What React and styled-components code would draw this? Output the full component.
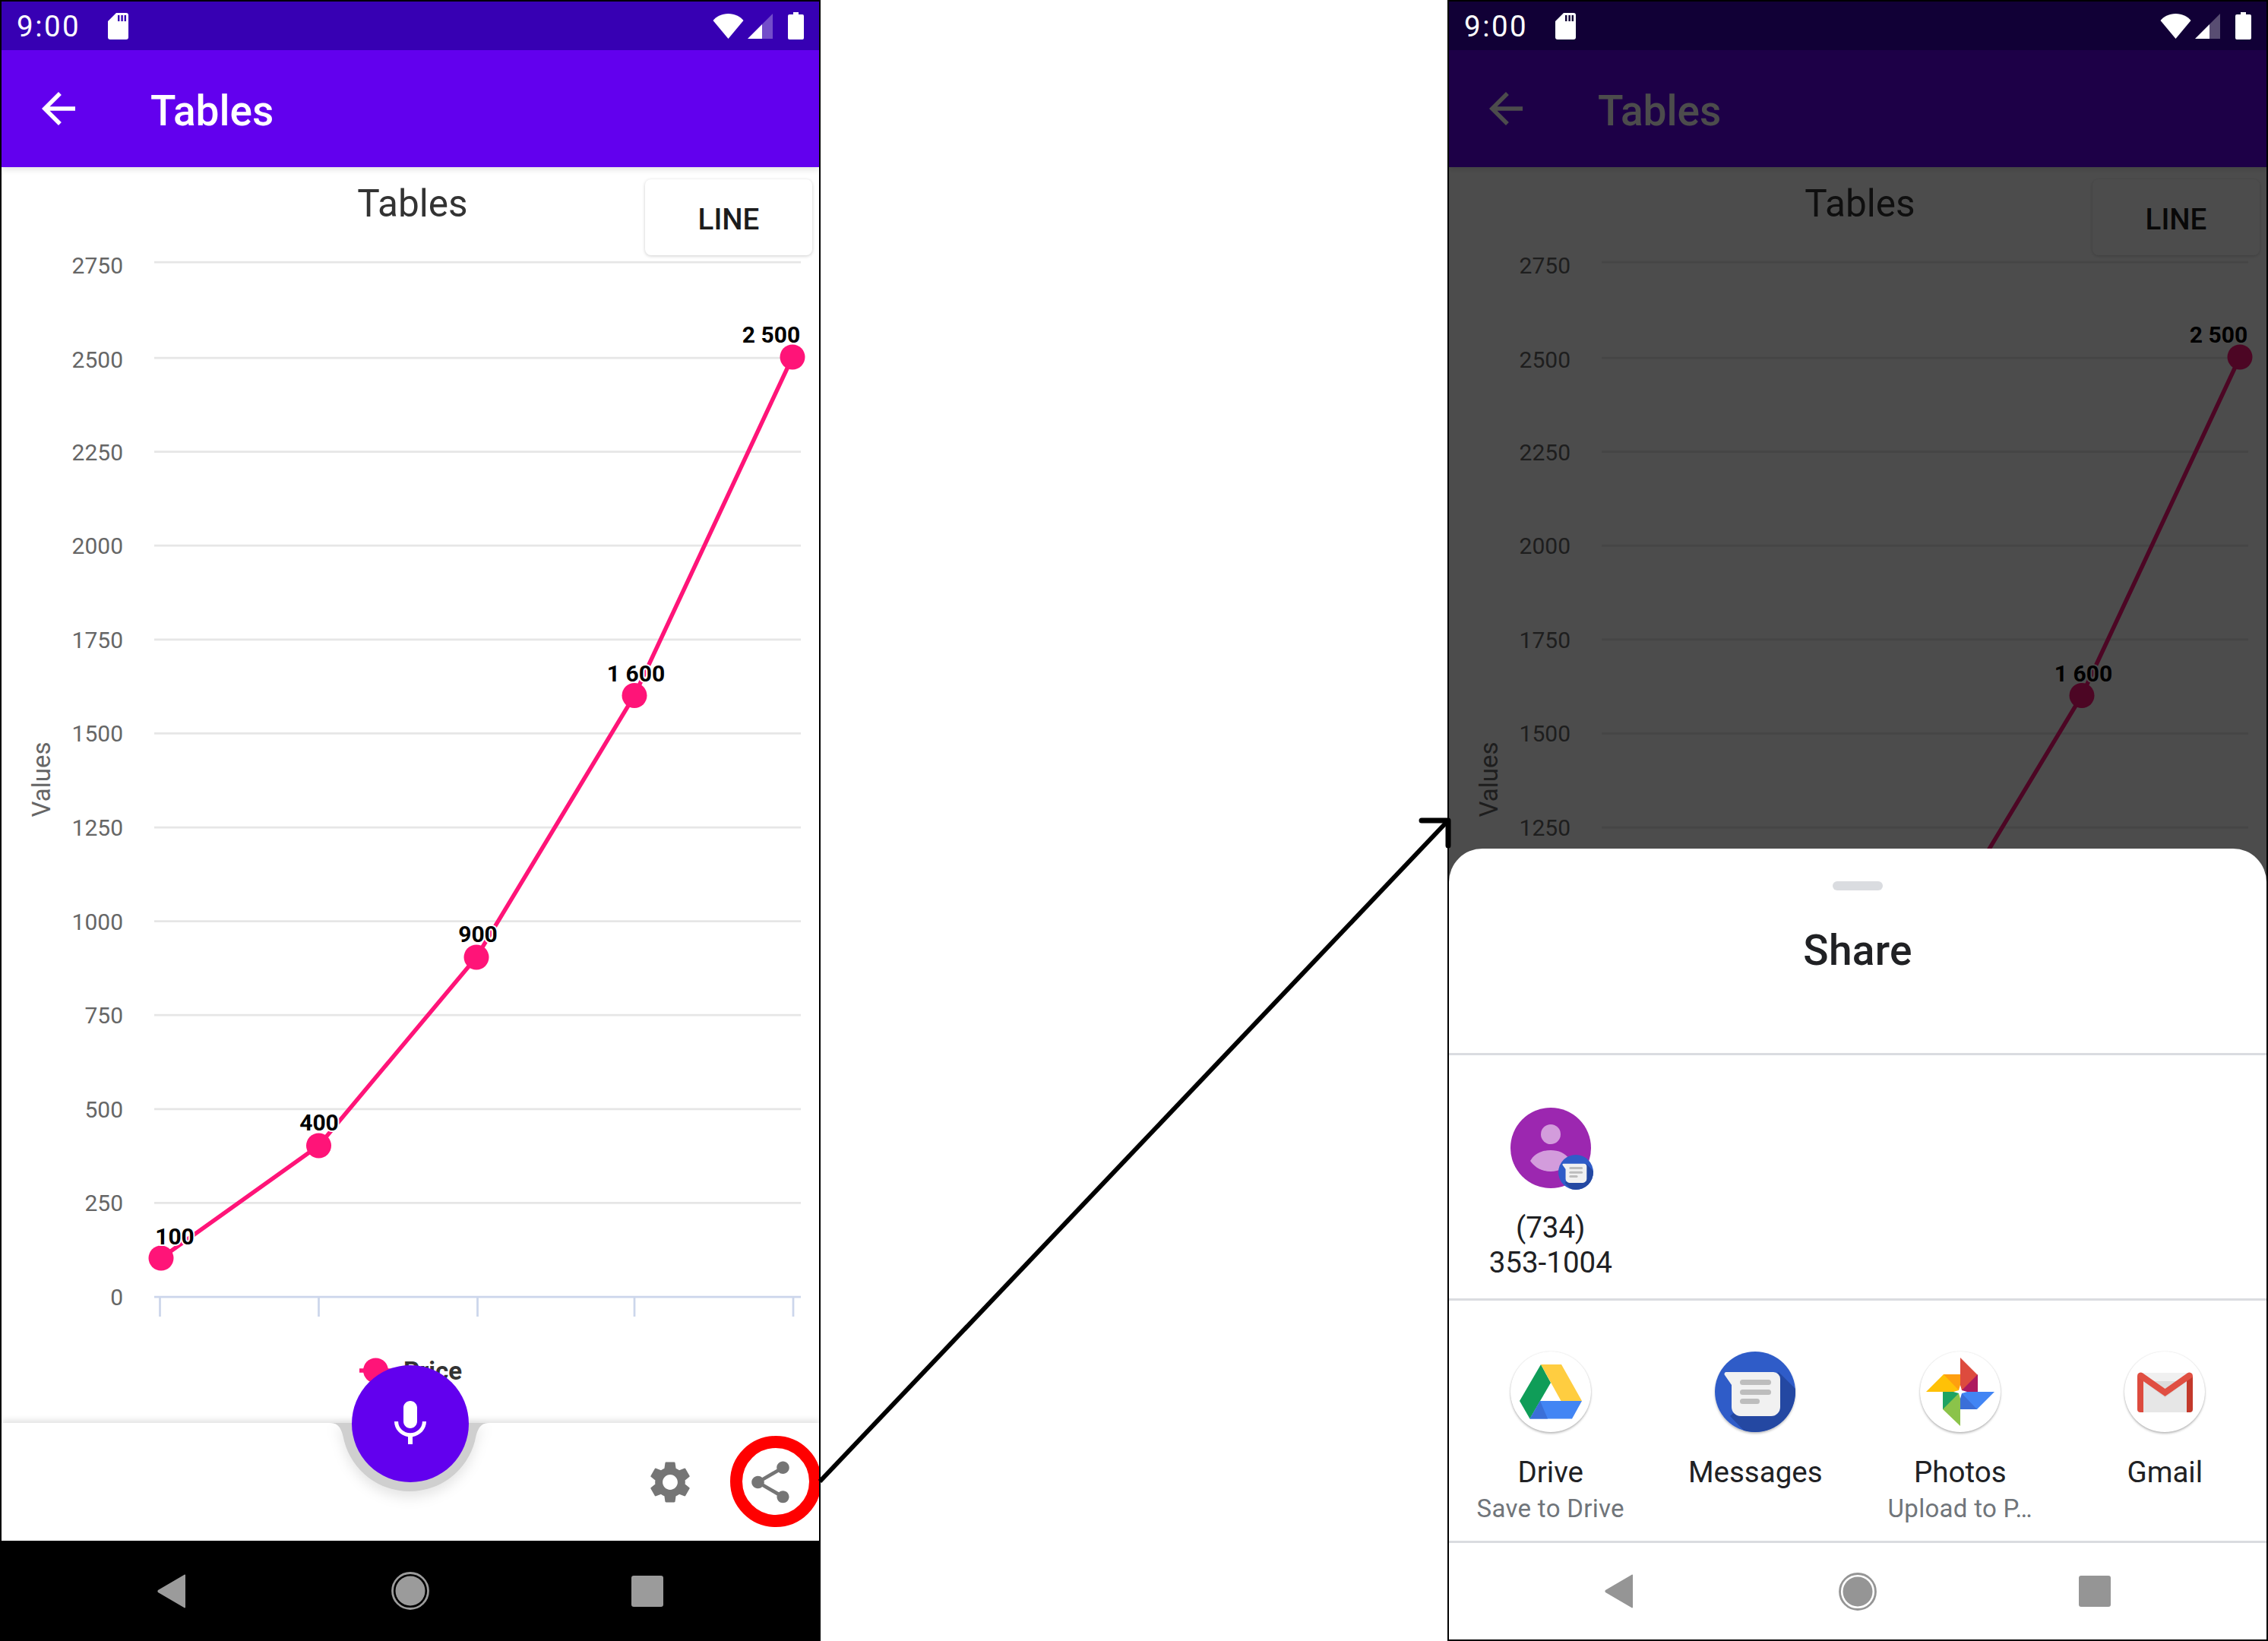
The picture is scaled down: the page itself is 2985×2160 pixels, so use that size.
import React from "react";
import styled, { createGlobalStyle } from "styled-components";
import { MdArrowBack, MdMic, MdSettings, MdShare } from "react-icons/md";

const GlobalStyle = createGlobalStyle`
  html, body {
    margin: 0;
    padding: 0;
    background: #fff;
    font-family: Roboto, "Liberation Sans", sans-serif;
  }
`;

const yTicks = [2750, 2500, 2250, 2000, 1750, 1500, 1250, 1000, 750, 500, 250, 0];
const xTicks = [208.5, 417.5, 626.5, 833, 1042];
const points = [
  { x: 210, y: 1656, label: "100", lx: 228, ly: 1638 },
  { x: 417.5, y: 1508, label: "400", lx: 418, ly: 1488 },
  { x: 625, y: 1260, label: "900", lx: 627, ly: 1240 },
  { x: 833, y: 915.5, label: "1 600", lx: 835, ly: 897 },
  { x: 1041, y: 470, label: "2 500", lx: 1013, ly: 451 },
];

// chart coordinates are the page's, minus the app header
const TOP = 220;
const yOf = (v) => 1707 - v * 0.4944 - TOP;
const gridY = (t) => (t === 2750 ? 345 - TOP : yOf(t));
const labelY = (t) => yOf(t) + (t >= 2500 ? 13 : 11);

const Chart = () => (
  <ChartSvg viewBox="0 0 1076 1653">
    <text x="541" y={285 - TOP} textAnchor="middle" fontSize="49.5" fill="#333">
      Tables
    </text>
    {yTicks.map((t) => (
      <g key={t}>
        <line
          x1="201"
          x2="1052"
          y1={gridY(t)}
          y2={gridY(t)}
          stroke={t === 0 ? "#ccd6eb" : "#e6e6e6"}
          strokeWidth="2.75"
        />
        <text x="160" y={labelY(t)} textAnchor="end" fontSize="30" fill="#666">
          {t}
        </text>
      </g>
    ))}
    {xTicks.map((x) => (
      <line key={x} x1={x} x2={x} y1={1707 - TOP} y2={1733 - TOP} stroke="#ccd6eb" strokeWidth="2.75" />
    ))}
    <text
      x="0"
      y="0"
      transform={`translate(64 ${1026 - TOP}) rotate(-90)`}
      textAnchor="middle"
      fontSize="33"
      fill="#666"
    >
      Values
    </text>
    <polyline
      points={points.map((p) => `${p.x},${p.y - TOP}`).join(" ")}
      fill="none"
      stroke="#ff1478"
      strokeWidth="5.5"
    />
    {points.map((p) => (
      <circle key={p.x} cx={p.x} cy={p.y - TOP} r="16.5" fill="#ff1478" />
    ))}
    {points.map((p) => (
      <DataLabel key={p.label} x={p.lx} y={p.ly - TOP} textAnchor="middle">
        {p.label}
      </DataLabel>
    ))}
    <line x1="471" x2="514" y1={1804 - TOP} y2={1804 - TOP} stroke="#ff1478" strokeWidth="5.5" />
    <circle cx="492.5" cy={1804 - TOP} r="16.5" fill="#ff1478" />
    <text x="529" y={1816 - TOP} fontSize="33" fontWeight="700" fill="#333">
      Price
    </text>
  </ChartSvg>
);

const SdIcon = () => (
  <svg width="27" height="35" viewBox="0 0 27 35">
    <path d="M11 0h13a3 3 0 0 1 3 3v29a3 3 0 0 1-3 3H3a3 3 0 0 1-3-3V11z" fill="#fff" />
    <path d="M13 3h2.4v8H13zM17.4 3h2.4v8h-2.4zM21.6 3H24v8h-2.4z" fill="currentColor" />
  </svg>
);

const WifiIcon = () => (
  <svg width="41" height="33" viewBox="0 0 41 33">
    <path d="M20.5 33 0.5 9C5 3.5 12 0 20.5 0S36 3.5 40.5 9z" fill="#fff" />
  </svg>
);

const SignalIcon = () => (
  <svg width="33" height="33" viewBox="0 0 33 33">
    <path d="M33 0v33H19V14z" fill="#fff" opacity="0.3" />
    <path d="M19 14v19H0z" fill="#fff" />
  </svg>
);

const BatteryIcon = () => (
  <svg width="21" height="36" viewBox="0 0 21 36">
    <path
      d="M7 0h7v3h5a2 2 0 0 1 2 2v29a2 2 0 0 1-2 2H2a2 2 0 0 1-2-2V5a2 2 0 0 1 2-2h5z"
      fill="#fff"
    />
  </svg>
);

const NavIcons = ({ color }) => (
  <NavRow>
    <svg width="38" height="45" viewBox="0 0 38 45">
      <path d="M37 1.5v42a1 1 0 0 1-1.8.6L1 24a2.4 2.4 0 0 1 0-3L35.2.9a1 1 0 0 1 1.8.6z" fill={color} />
    </svg>
    <svg width="50" height="50" viewBox="0 0 50 50">
      <circle cx="25" cy="25" r="23.5" fill="none" stroke={color} strokeWidth="2.8" />
      <circle cx="25" cy="25" r="19.5" fill={color} />
    </svg>
    <NavSquare $color={color} />
  </NavRow>
);

const DriveIcon = () => (
  <svg width="82" height="72" viewBox="0 0 82 72">
    <path d="M28 0 0 48l13.5 23.5L41 24z" fill="#0f9d58" />
    <path d="M28 0h27l27 48H54.5z" fill="#ffcd40" />
    <path d="M13.5 71.5 27 48h55L69 71.5z" fill="#4285f4" />
    <path d="M13.5 71.5 27 48l10 23.5z" fill="#3a6fd8" />
  </svg>
);

const MessagesIcon = () => (
  <svg width="106" height="106" viewBox="0 0 106 106">
    <defs>
      <clipPath id="msgClip">
        <circle cx="53" cy="53" r="53" />
      </clipPath>
    </defs>
    <circle cx="53" cy="53" r="53" fill="#2f5cc8" />
    <path clipPath="url(#msgClip)" d="M84 27l30 30-20 70H60L20 85z" fill="#2448a2" />
    <path
      d="M15 27h62a9 9 0 0 1 9 9v37a12 12 0 0 1-12 12H34a12 12 0 0 1-12-12V44L13 31a2.5 2.5 0 0 1 2-4z"
      fill="#f1f1f1"
    />
    <rect x="33" y="37" width="41" height="7" rx="3.5" fill="#bdbdbd" />
    <rect x="33" y="50" width="41" height="7" rx="3.5" fill="#bdbdbd" />
    <rect x="33" y="62" width="26" height="7" rx="3.5" fill="#bdbdbd" />
  </svg>
);

const PhotosIcon = () => (
  <svg width="90" height="90" viewBox="0 0 90 90">
    <path d="M45 0l23 23v22H45z" fill="#dd4b3e" />
    <path d="M68 22v23H45z" fill="#ad1a5f" />
    <path d="M90 45L67 68H45V45z" fill="#4285f4" />
    <path d="M67 68H45V45z" fill="#3a6fd8" />
    <path d="M45 90L22 68V45h23z" fill="#8bc34a" />
    <path d="M22 68V45h23z" fill="#1ea362" />
    <path d="M0 45l23-23h22v23z" fill="#ffc107" />
    <path d="M23 22h22v23z" fill="#ff9f10" />
    <path d="M45 36l2 7 7 2-7 2-2 7-2-7-7-2 7-2z" fill="#fff" />
  </svg>
);

const GmailIcon = () => (
  <svg width="73" height="53" viewBox="0 0 73 53">
    <rect x="3" y="1" width="67" height="51" fill="#f0f0f0" rx="3" />
    <path d="M8 12h57v41H8z" fill="#e6e6e6" />
    <path d="M8 12h57L36.5 34z" fill="#d5d5d5" opacity="0.6" />
    <path d="M8 53V10L0 5v44a4 4 0 0 0 4 4z" fill="#dd4b3e" />
    <path d="M65 53V10l8-5v44a4 4 0 0 1-4 4z" fill="#c3392b" />
    <path
      d="M0 5a4.5 4.5 0 0 1 7-3.7L36.5 22 66 1.3A4.5 4.5 0 0 1 73 5v1.5L36.5 32 0 6.5z"
      fill="#e04f42"
    />
  </svg>
);

const ContactIcon = () => (
  <svg width="106" height="106" viewBox="0 0 106 106">
    <circle cx="53" cy="53" r="53" fill="#9c27b0" />
    <circle cx="53" cy="35" r="13" fill="#d39cdc" />
    <path d="M26 70c6-10 16-14 27-14s20 4 26 14c-6 9-15 14-26 14S32 79 26 70z" fill="#d39cdc" />
  </svg>
);

const NotchShape = () => (
  <NotchSvg viewBox="0 -6 208 116">
    <path d="M0 0C11 0 15 8 18 24A89 89 0 0 0 190 24C193 8 197 0 208 0Z" fill="#cfcfcf" />
  </NotchSvg>
);

const apps = [
  { name: "Drive", sub: "Save to Drive", plain: true, Icon: DriveIcon },
  { name: "Messages", plain: false, Icon: MessagesIcon },
  { name: "Photos", sub: "Upload to P…", plain: true, Icon: PhotosIcon },
  { name: "Gmail", plain: true, Icon: GmailIcon },
];

const Screen = () => (
  <>
    <AppBar>
      <BackButton>
        <MdArrowBack size={66} color="#fff" />
      </BackButton>
      <AppTitle>Tables</AppTitle>
    </AppBar>
    <Body>
      <Chart />
      <LineButton>LINE</LineButton>
    </Body>
  </>
);

const StatusBar = ({ $dim }) => (
  <Status $dim={$dim}>
    <StatusLeft>
      <Clock>9:00</Clock>
      <SdWrap $dim={$dim}>
        <SdIcon />
      </SdWrap>
    </StatusLeft>
    <StatusRight>
      <WifiIcon />
      <SignalIcon />
      <BatteryIcon />
    </StatusRight>
  </Status>
);

const App = () => (
  <Page>
    <GlobalStyle />
    <Phone>
      <StatusBar />
      <Screen />
      <BottomBar>
        <NotchShape />
        <Fab>
          <MdMic size={72} color="#fff" />
        </Fab>
        <BarActions>
          <MdSettings size={66} color="#757575" />
          <MdShare size={66} color="#757575" />
        </BarActions>
      </BottomBar>
      <NavBar $dark>
        <NavIcons color="#9b9b9b" />
      </NavBar>
      <RedRing />
    </Phone>

    <Phone>
      <StatusBar $dim />
      <Screen />
      <Scrim />
      <Sheet>
        <Handle />
        <SheetTitle>Share</SheetTitle>
        <Divider />
        <ContactRow>
          <AppCell>
            <AvatarWrap>
              <ContactIcon />
              <Badge>
                <MessagesIcon />
              </Badge>
            </AvatarWrap>
            <ContactName>
              (734)
              <br />
              353-1004
            </ContactName>
          </AppCell>
        </ContactRow>
        <Divider />
        <AppGrid>
          {apps.map(({ name, sub, plain, Icon }) => (
            <AppCell key={name}>
              <AppCircle $plain={plain}>
                <Icon />
              </AppCircle>
              <AppName>{name}</AppName>
              {sub && <AppSub>{sub}</AppSub>}
            </AppCell>
          ))}
        </AppGrid>
        <Divider />
        <NavBar>
          <NavIcons color="#959595" />
        </NavBar>
      </Sheet>
    </Phone>

    <ArrowOverlay viewBox="0 0 2985 2160">
      <path d="M1079 1950L1905 1081" fill="none" stroke="#000" strokeWidth="6" />
      <path
        d="M1871 1080H1906V1113"
        fill="none"
        stroke="#000"
        strokeWidth="7"
        strokeLinecap="round"
        strokeLinejoin="round"
      />
    </ArrowOverlay>
  </Page>
);

const Page = styled.div`
  position: relative;
  display: flex;
  justify-content: space-between;
  width: 2985px;
  height: 2160px;
  overflow: hidden;
`;

const Phone = styled.div`
  position: relative;
  display: flex;
  flex-direction: column;
  box-sizing: border-box;
  width: 1080px;
  height: 2160px;
  border: 2px solid #000;
  background: #fff;
  overflow: hidden;
`;

const Status = styled.div`
  position: relative;
  z-index: 3;
  display: flex;
  align-items: center;
  justify-content: space-between;
  flex: none;
  height: 64px;
  padding: 0 20px;
  background: ${(p) => (p.$dim ? "#110036" : "#3700b3")};
`;

const StatusLeft = styled.div`
  display: flex;
  align-items: center;
  gap: 36px;
`;

const Clock = styled.span`
  color: #fff;
  font-size: 38.5px;
  letter-spacing: 2.5px;
`;

const SdWrap = styled.span`
  display: flex;
  color: ${(p) => (p.$dim ? "#110036" : "#3700b3")};
`;

const StatusRight = styled.div`
  display: flex;
  align-items: center;
  gap: 5px;

  svg:last-child {
    margin-left: 15px;
  }
`;

const AppBar = styled.div`
  position: relative;
  z-index: 1;
  display: flex;
  align-items: center;
  flex: none;
  height: 154px;
  background: #6200ee;
  box-shadow: 0 3px 8px rgba(0, 0, 0, 0.12);
`;

const BackButton = styled.div`
  display: flex;
  margin-left: 42px;
`;

const AppTitle = styled.div`
  margin-left: 88px;
  padding-top: 6px;
  color: #fff;
  font-size: 55px;
  font-weight: 500;
`;

const Body = styled.div`
  position: relative;
  flex: none;
  height: 1653px;
`;

const ChartSvg = styled.svg`
  display: block;
  width: 1076px;
  height: 1653px;
  font-family: Roboto, sans-serif;
`;

const DataLabel = styled.text`
  font-size: 30px;
  font-weight: 700;
  fill: #000;
  stroke: #fff;
  stroke-width: 4px;
  paint-order: stroke;
`;

const LineButton = styled.div`
  position: absolute;
  top: 16px;
  right: 9px;
  display: flex;
  align-items: center;
  justify-content: center;
  box-sizing: border-box;
  width: 220px;
  height: 100px;
  padding-top: 4px;
  border-radius: 8px;
  background: #fff;
  box-shadow: 0 1px 4px rgba(0, 0, 0, 0.2);
  color: #1c1c1c;
  font-size: 38.5px;
  font-weight: 500;
`;

const BottomBar = styled.div`
  position: relative;
  flex: none;
  height: 155px;
  background: #fff;
  box-shadow: 0 -3px 8px rgba(0, 0, 0, 0.13);
`;

const NotchSvg = styled.svg`
  position: absolute;
  top: -6px;
  left: 433px;
  width: 208px;
  height: 116px;
  overflow: visible;
  filter: drop-shadow(0 8px 8px rgba(0, 0, 0, 0.1));
`;

const Fab = styled.div`
  position: absolute;
  top: -76px;
  left: 461px;
  display: flex;
  align-items: center;
  justify-content: center;
  width: 154px;
  height: 154px;
  border-radius: 50%;
  background: #6200ee;
`;

const BarActions = styled.div`
  position: absolute;
  top: 45px;
  right: 31px;
  display: flex;
  gap: 66px;
`;

const NavBar = styled.div`
  flex: 1;
  display: flex;
  align-items: center;
  padding-top: ${(p) => (p.$dark ? "2px" : "0")};
  background: ${(p) => (p.$dark ? "#000" : "#fff")};
`;

const NavRow = styled.div`
  display: grid;
  grid-template-columns: 1fr 50px 1fr;
  align-items: center;
  box-sizing: border-box;
  width: 100%;
  padding: 0 205px;

  svg:first-child {
    justify-self: start;
  }
`;

const NavSquare = styled.div`
  justify-self: end;
  width: 42px;
  height: 41px;
  border-radius: 3px;
  background: ${(p) => p.$color};
`;

const RedRing = styled.div`
  position: absolute;
  left: 959px;
  top: 1888px;
  box-sizing: border-box;
  width: 120px;
  height: 120px;
  border: 16px solid #f00;
  border-radius: 50%;
`;

const Scrim = styled.div`
  position: absolute;
  inset: 0;
  z-index: 2;
  background: rgba(0, 0, 0, 0.7);
`;

const Sheet = styled.div`
  position: absolute;
  left: 0;
  right: 0;
  bottom: 0;
  z-index: 4;
  display: flex;
  flex-direction: column;
  height: 1041px;
  border-radius: 44px 44px 0 0;
  background: #fff;
`;

const Handle = styled.div`
  flex: none;
  width: 66px;
  height: 12px;
  margin: 43px auto 0;
  border-radius: 6px;
  background: #dadce0;
`;

const SheetTitle = styled.div`
  flex: none;
  box-sizing: border-box;
  height: 214px;
  padding-top: 47px;
  color: #202124;
  font-size: 55px;
  font-weight: 500;
  line-height: 64px;
  letter-spacing: 0.3px;
  text-align: center;
`;

const Divider = styled.div`
  flex: none;
  height: 3px;
  background: #dadce0;
`;

const ContactRow = styled.div`
  flex: none;
  display: grid;
  grid-template-columns: repeat(4, 269.5px);
  box-sizing: border-box;
  height: 320px;
  margin-left: -1px;
  padding-top: 69px;
`;

const AppCell = styled.div`
  display: flex;
  flex-direction: column;
  align-items: center;
`;

const AvatarWrap = styled.div`
  position: relative;
  width: 106px;
  height: 106px;

  > svg {
    display: block;
  }
`;

const Badge = styled.div`
  position: absolute;
  left: 63px;
  top: 62px;
  width: 46px;
  height: 46px;

  svg {
    display: block;
    width: 46px;
    height: 46px;
  }
`;

const ContactName = styled.div`
  margin-top: 29px;
  color: #202124;
  font-size: 38.5px;
  line-height: 46px;
  text-align: center;
`;

const AppGrid = styled.div`
  flex: none;
  display: grid;
  grid-template-columns: repeat(4, 269.5px);
  box-sizing: border-box;
  height: 316px;
  margin-left: -1px;
  padding-top: 67px;
`;

const AppCircle = styled.div`
  display: flex;
  align-items: center;
  justify-content: center;
  width: 106px;
  height: 106px;
  border-radius: 50%;
  background: #fff;
  box-shadow: ${(p) =>
    p.$plain
      ? "0 2px 3px rgba(0, 0, 0, 0.25), 0 0 2px rgba(0, 0, 0, 0.12)"
      : "0 2px 3px rgba(0, 0, 0, 0.25)"};
`;

const AppName = styled.div`
  margin-top: 30px;
  color: #202124;
  font-size: 38.5px;
  line-height: 46px;
`;

const AppSub = styled.div`
  margin-top: 2px;
  color: #70757a;
  font-size: 33px;
  line-height: 46px;
  letter-spacing: 0.3px;
`;

const ArrowOverlay = styled.svg`
  position: absolute;
  inset: 0;
  width: 2985px;
  height: 2160px;
  pointer-events: none;
`;

export default App;
